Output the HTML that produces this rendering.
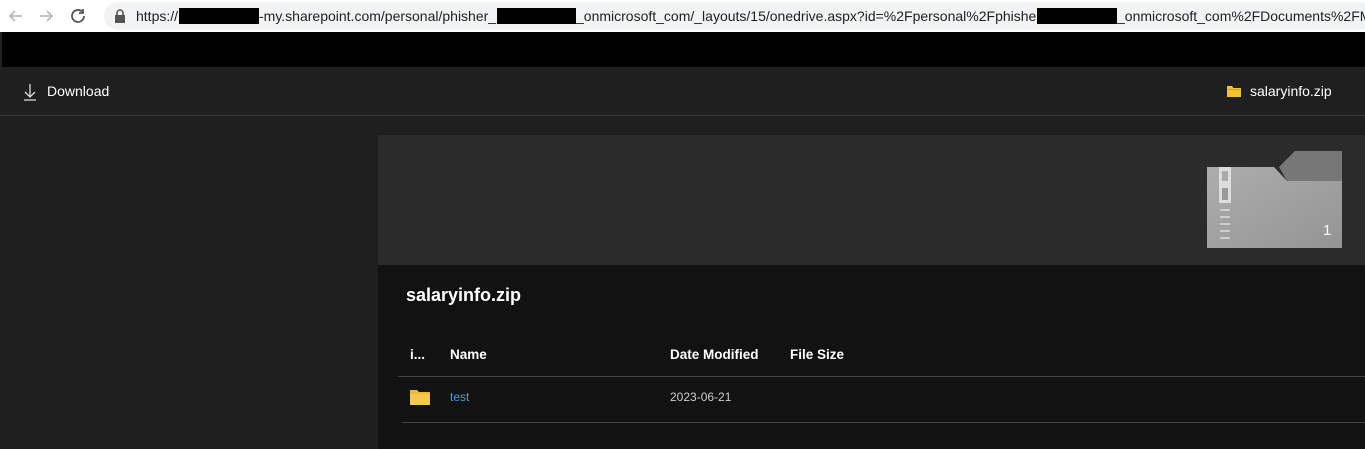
<!DOCTYPE html>
<html><head><style>
*{margin:0;padding:0;box-sizing:border-box}
body{width:1365px;height:449px;overflow:hidden;background:#1f1f1f;font-family:"Liberation Sans",sans-serif;position:relative}
.a{position:absolute}
.url{font-size:14px;color:#202124;white-space:nowrap;top:8px}
.box{background:#000;height:16px;top:8px}
</style></head><body>
<div class="a" style="left:0;top:0;width:1365px;height:32px;background:#fff"></div>
<div class="a" style="left:104px;top:2px;width:1270px;height:28px;border-radius:14px;background:#f1f3f4"></div>
<svg class="a" style="left:6px;top:7px" width="80" height="18" viewBox="0 0 80 18">
<path d="M16 9H4M9 4L4 9l5 5" stroke="#bbb" stroke-width="1.8" fill="none"/>
<path d="M34 9h12M41 4l5 5-5 5" stroke="#bbb" stroke-width="1.8" fill="none"/>
<path d="M78 9a6 6 0 1 1-2-4.5" stroke="#555" stroke-width="1.8" fill="none"/><path d="M77 2v4h-4" stroke="#555" stroke-width="1.8" fill="none"/>
</svg>
<svg class="a" style="left:114px;top:9px" width="12" height="14"><rect x="1" y="6" width="10" height="8" fill="#555"/><path d="M3 6V4a3 3 0 0 1 6 0v2" stroke="#555" stroke-width="1.6" fill="none"/></svg>
<div class="a url" style="left:136px">https://</div>
<div class="a url" style="left:259px">-my.sharepoint.com/personal/phisher_</div>
<div class="a url" style="left:576px">_onmicrosoft_com/_layouts/15/onedrive.aspx?id=%2Fpersonal%2Fphisher_</div>
<div class="a url" style="left:1117px">_onmicrosoft_com%2FDocuments%2FMi</div>
<div class="a box" style="left:179px;width:80px"></div>
<div class="a box" style="left:497px;width:79px"></div>
<div class="a box" style="left:1037px;width:80px"></div>
<div class="a" style="left:2px;top:32px;width:1363px;height:35px;background:#000"></div>
<div class="a" style="left:0;top:67px;width:1365px;height:49px;background:#1f1f1f;border-bottom:1px solid #3a3a3a"></div>
<svg class="a" style="left:23px;top:83px" width="14" height="18"><path d="M7 1v13M2 9l5 5 5-5M1 17h12" stroke="#ddd" stroke-width="1.3" fill="none"/></svg>
<div class="a" style="left:47px;top:83px;font-size:14px;color:#fff">Download</div>
<svg class="a" style="left:1227px;top:86px" width="14" height="11"><path d="M0 0h5l1.5 2H14v9H0z" fill="#f4c430"/><rect x="0" y="3" width="14" height="1" fill="#d9a520"/></svg>
<div class="a" style="left:1250px;top:83px;font-size:14px;color:#fff">salaryinfo.zip</div>
<div class="a" style="left:378px;top:135px;width:987px;height:130px;background:#2b2b2b"></div>
<div class="a" style="left:378px;top:265px;width:987px;height:184px;background:#121212"></div>
<svg class="a" style="left:1207px;top:151px" width="135" height="97" viewBox="0 0 135 97">
<defs><linearGradient id="g" x1="0" y1="0" x2="1" y2="1"><stop offset="0" stop-color="#adadad"/><stop offset="1" stop-color="#949494"/></linearGradient></defs>
<path d="M72 16L88 0h47v30H80z" fill="#777"/>
<path d="M0 16h67l13 14h55v67H0z" fill="url(#g)"/>
<rect x="12" y="16" width="12" height="36" fill="#ddd"/><rect x="15" y="20" width="6" height="10" fill="#aaa"/><rect x="15" y="37" width="6" height="12" fill="#999"/>
<g stroke="#ddd" stroke-width="1.5"><path d="M13 59h10M13 66h10M13 73h10M13 80h10M13 87h10"/></g>
<text x="116" y="84" font-size="15" fill="#fff" font-family="Liberation Sans">1</text>
</svg>
<div class="a" style="left:406px;top:285px;font-size:18px;font-weight:bold;color:#fff">salaryinfo.zip</div>
<div class="a" style="left:410px;top:347px;font-size:13.5px;font-weight:bold;color:#fff">i...</div>
<div class="a" style="left:450px;top:347px;font-size:13.5px;font-weight:bold;color:#fff">Name</div>
<div class="a" style="left:670px;top:347px;font-size:13.5px;font-weight:bold;color:#fff">Date Modified</div>
<div class="a" style="left:790px;top:347px;font-size:13.5px;font-weight:bold;color:#fff">File Size</div>
<div class="a" style="left:398px;top:376px;width:967px;height:1px;background:#444"></div>
<svg class="a" style="left:410px;top:390px" width="20" height="15"><path d="M0 0h7l2 2h11v13H0z" fill="#e8b840"/><rect x="0" y="4" width="20" height="11" fill="#f2c94c"/></svg>
<div class="a" style="left:450px;top:390px;font-size:12px;color:#4c9be8">test</div>
<div class="a" style="left:670px;top:390px;font-size:12px;color:#ccc">2023-06-21</div>
<div class="a" style="left:402px;top:422px;width:963px;height:1px;background:#444"></div>
</body></html>
